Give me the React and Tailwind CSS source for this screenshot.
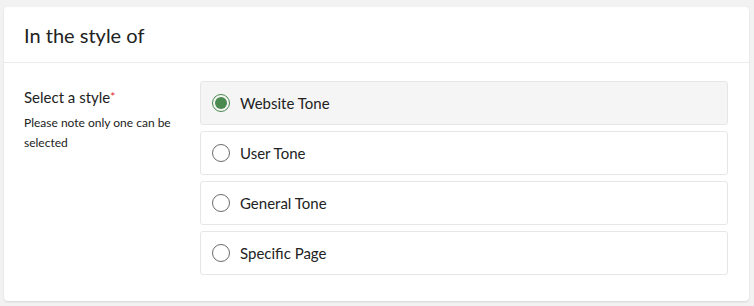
import React, { useState } from 'react'

const options = ['Website Tone', 'User Tone', 'General Tone', 'Specific Page']

const StylePicker = () => {
  const [selected, setSelected] = useState('Website Tone')

  return (
    <div className="min-h-screen bg-[#f3f2f2] pt-[7px] pl-[4px]" style={{ fontFamily: 'Lato, "Open Sans", sans-serif' }}>
      <div className="w-[745px] h-[294px] bg-white rounded-[4px] shadow-[0_1px_2px_rgba(0,0,0,0.12)]">
        <div className="h-[56px] pl-[20px] flex items-center border-b border-[#ececec]">
          <h2 className="text-[20px] text-[#222] leading-none">In the style of</h2>
        </div>

        <div className="flex pl-[20px] pr-[21px] pt-[18px]">
          <div className="w-[176px] pt-[6px]">
            <p className="text-[15px] text-[#222] leading-[20px]">
              Select a style<span className="text-[#e0262b] text-[12px] align-top">*</span>
            </p>
            <p className="text-[12px] text-[#222] leading-[20px] mt-[6px]">
              Please note only one can be selected
            </p>
          </div>

          <div className="flex-1 flex flex-col gap-[6px]">
            {options.map((opt) => {
              const active = opt === selected
              return (
                <label
                  key={opt}
                  onClick={() => setSelected(opt)}
                  className={`h-[44px] flex items-center gap-[10px] pl-[11px] rounded-[3px] border cursor-pointer ${
                    active ? 'bg-[#f5f5f5] border-[#e6e6e6]' : 'bg-white border-[#e6e6e6]'
                  }`}
                >
                  <span
                    className={`w-[18px] h-[18px] rounded-full border flex items-center justify-center ${
                      active ? 'border-[#4a8a4f]' : 'border-[#6b6b6b]'
                    }`}
                  >
                    {active && <span className="w-[12px] h-[12px] rounded-full bg-[#4a8a4f]" />}
                  </span>
                  <span className="text-[15px] text-[#222]">{opt}</span>
                </label>
              )
            })}
          </div>
        </div>
      </div>
    </div>
  )
}

export default function App() {
  return <StylePicker />
}
